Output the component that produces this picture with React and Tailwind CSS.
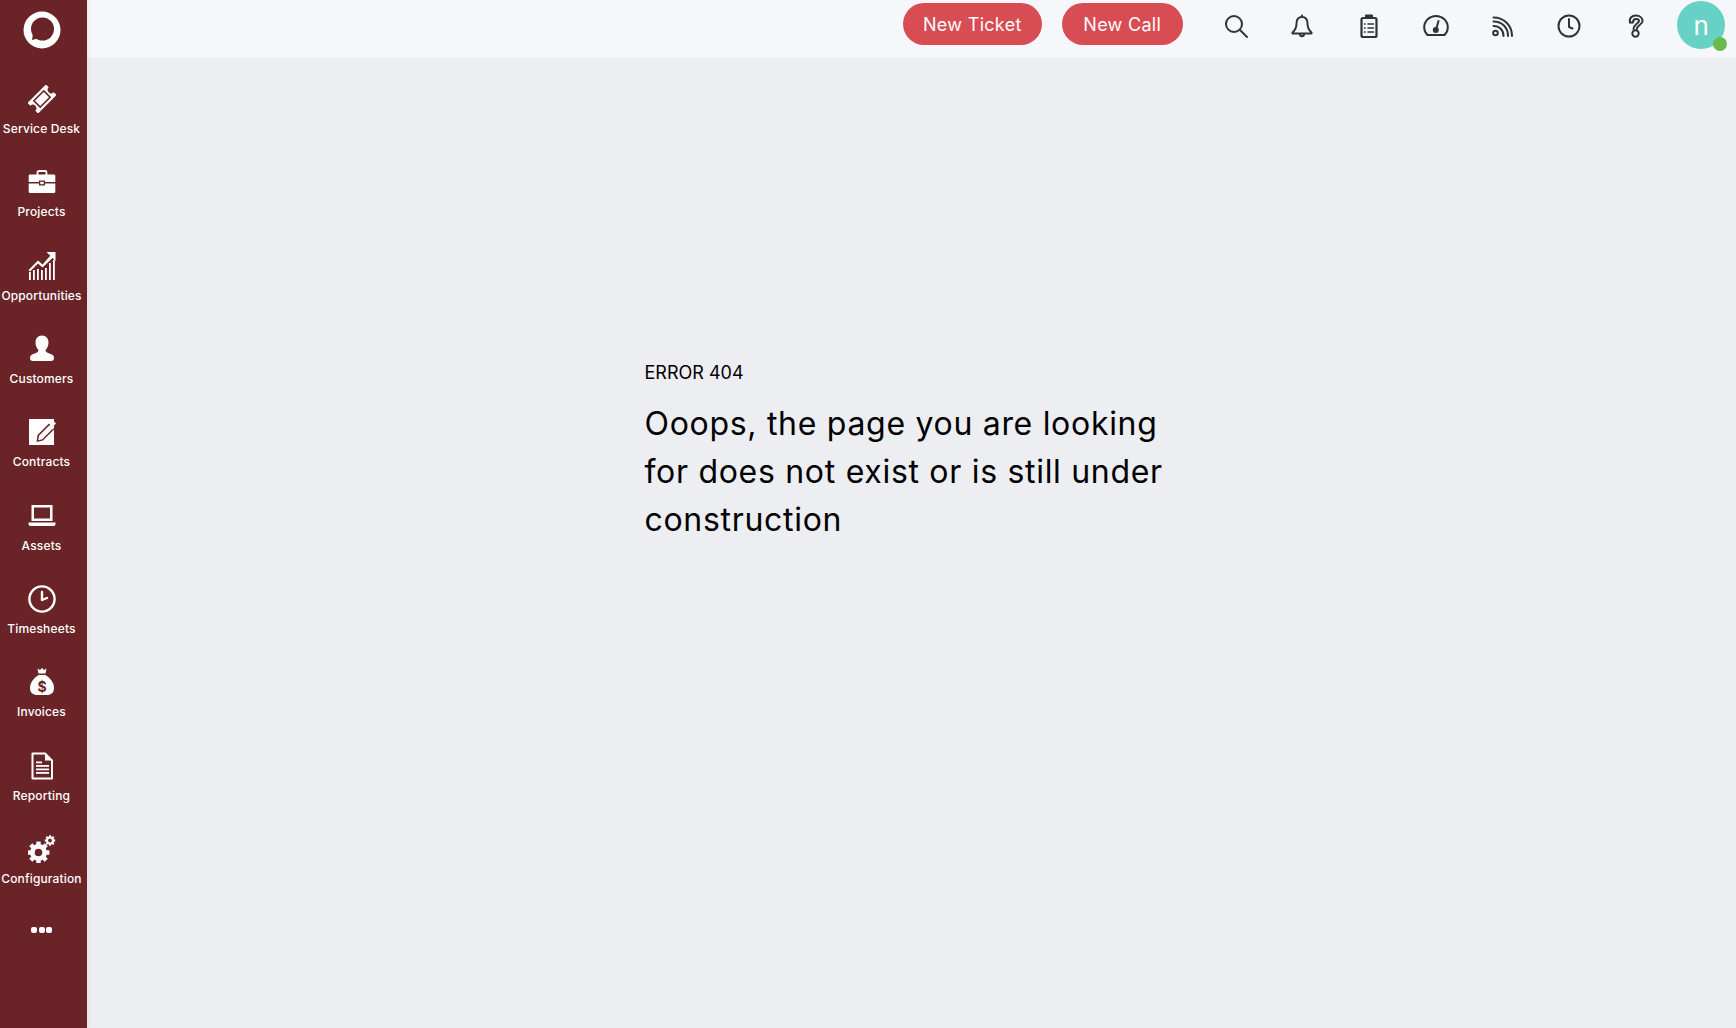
import React from "react";

const W = "#ffffff";
const D = "#6a2428";

const Logo = () => (
  <svg width="38" height="38" viewBox="0 0 38 38">
    <circle cx="19" cy="19" r="18.5" fill={W} />
    <circle cx="19.5" cy="18" r="11.5" fill={D} />
    <path d="M10 22 L9 29 L17 27 Z" fill={D} />
  </svg>
);

const Ticket = () => (
  <svg width="28" height="28" viewBox="0 0 28 28">
    <g transform="rotate(-45 14 14)">
      <path d="M1 6.5 H27 V10.5 A3.5 3.5 0 0 0 27 17.5 V21.5 H1 V17.5 A3.5 3.5 0 0 0 1 10.5 Z" fill={W} />
      <rect x="7" y="9.5" width="14" height="9" fill={W} stroke={D} strokeWidth="1.6" />
    </g>
  </svg>
);

const Briefcase = () => (
  <svg width="28" height="28" viewBox="0 0 28 28">
    <path d="M9.5 7 V4.5 A1.5 1.5 0 0 1 11 3 H17 A1.5 1.5 0 0 1 18.5 4.5 V7" fill="none" stroke={W} strokeWidth="1.8" />
    <path d="M2 6.5 H26 A1.3 1.3 0 0 1 27.3 7.8 V14 H17 V12.5 H11 V14 H0.7 V7.8 A1.3 1.3 0 0 1 2 6.5 Z" fill={W} />
    <path d="M0.7 15.5 H11 V17.5 H17 V15.5 H27.3 V23.7 A1.3 1.3 0 0 1 26 25 H2 A1.3 1.3 0 0 1 0.7 23.7 Z" fill={W} />
    <rect x="12.3" y="13.8" width="3.4" height="2.4" fill={W} />
  </svg>
);

const Chart = () => (
  <svg width="28" height="28" viewBox="0 0 28 28">
    <g fill={W}>
      <rect x="1" y="20" width="1.8" height="8" />
      <rect x="5" y="18" width="1.8" height="10" />
      <rect x="9" y="17" width="1.8" height="11" />
      <rect x="13" y="18" width="1.8" height="10" />
      <rect x="17" y="16" width="1.8" height="12" />
      <rect x="21" y="11" width="1.8" height="17" />
      <rect x="25" y="8" width="1.8" height="20" />
      <path d="M18.5 0 H27.5 V9 L24.5 6 L14.5 15.5 L10 11.5 L2 19.5 L0.5 18 L10 8.5 L14.5 12.5 L22.3 3.8 Z" />
    </g>
  </svg>
);

const User = () => (
  <svg width="28" height="28" viewBox="0 0 28 28">
    <path d="M14 0.5 C18 0.5 20.5 3.5 20.5 7.5 C20.5 11 19 13.5 17.5 15 C17.5 17 19 17.8 22 18.8 C25 19.8 26 21 26 23 C26 25 25 26 23 26 H5 C3 26 2 25 2 23 C2 21 3 19.8 6 18.8 C9 17.8 10.5 17 10.5 15 C9 13.5 7.5 11 7.5 7.5 C7.5 3.5 10 0.5 14 0.5 Z" fill={W} />
  </svg>
);

const Contract = () => (
  <svg width="28" height="28" viewBox="0 0 28 28">
    <path d="M1 1 H26 V27 H1 Z" fill={W} />
    <path d="M8.5 24 L9.5 17 L21 5.5 L26.5 11 L15 22.5 Z" fill={D} />
    <path d="M10.3 22.2 L11 17.8 L21 7.8 L24.3 11 L14.3 21.2 Z" fill={W} />
    <path d="M21.5 4 L24 1.5 L28 5.5 L25.5 8 Z" fill={W} />
    <path d="M22.6 6.6 L26 10 L24.5 11.5 L21 8 Z" fill={W} />
  </svg>
);

const Laptop = () => (
  <svg width="28" height="28" viewBox="0 0 28 28">
    <path d="M3.5 3 H24.5 V19 H3.5 Z M6 5.5 V16.5 H22 V5.5 Z" fill={W} fillRule="evenodd" />
    <path d="M0.5 20.5 H27.5 V22 A2 2 0 0 1 25.5 24 H2.5 A2 2 0 0 1 0.5 22 Z" fill={W} />
  </svg>
);

const Clock = () => (
  <svg width="28" height="28" viewBox="0 0 28 28" fill="none" stroke={W} strokeWidth="2.4">
    <circle cx="14" cy="14" r="12.6" />
    <path d="M14 7 V15 L19 13" strokeLinecap="round" strokeLinejoin="round" />
  </svg>
);

const MoneyBag = () => (
  <svg width="28" height="28" viewBox="0 0 28 28">
    <path d="M9.5 0.5 L12 2 L14 0 L16 2 L18.5 0.5 L17.5 5.5 H10.5 Z" fill={W} />
    <path d="M10.5 7 H17.5 C22 10 26 14.5 26 20 C26 25 22.5 27 19 27 H9 C5.5 27 2 25 2 20 C2 14.5 6 10 10.5 7 Z" fill={W} />
    <text x="14" y="23.5" textAnchor="middle" fontSize="14" fontWeight="700" fill={D} fontFamily="Inter, sans-serif">$</text>
  </svg>
);

const Report = () => (
  <svg width="28" height="28" viewBox="0 0 28 28">
    <path d="M4.5 1.5 H17 L24 8.5 V26.5 H4.5 Z" fill="none" stroke={W} strokeWidth="2" strokeLinejoin="round" />
    <path d="M17 1.5 V8.5 H24 Z" fill={W} />
    <g fill={W}>
      <rect x="8" y="9.5" width="6" height="1.8" />
      <rect x="8" y="13" width="13" height="1.8" />
      <rect x="8" y="16.5" width="13" height="1.8" />
      <rect x="8" y="20" width="13" height="1.8" />
    </g>
  </svg>
);

const Cog = ({ cx, cy, r, hole, teeth }) => (
  <g>
    {Array.from({ length: teeth }).map((_, i) => (
      <rect
        key={i}
        x={cx - r * 0.26}
        y={cy - r * 1.3}
        width={r * 0.52}
        height={r * 2.6}
        fill={W}
        transform={`rotate(${(i * 180) / teeth} ${cx} ${cy})`}
      />
    ))}
    <circle cx={cx} cy={cy} r={r} fill={W} />
    <circle cx={cx} cy={cy} r={hole} fill={D} />
  </g>
);

const Gears = () => (
  <svg width="28" height="28" viewBox="0 0 28 28">
    <Cog cx={10.5} cy={17.5} r={8.4} hole={3.8} teeth={4} />
    <Cog cx={22} cy={5.5} r={4} hole={1.9} teeth={4} />
  </svg>
);

const navItems = [
  { label: "Service Desk", icon: <Ticket /> },
  { label: "Projects", icon: <Briefcase /> },
  { label: "Opportunities", icon: <Chart /> },
  { label: "Customers", icon: <User /> },
  { label: "Contracts", icon: <Contract /> },
  { label: "Assets", icon: <Laptop /> },
  { label: "Timesheets", icon: <Clock /> },
  { label: "Invoices", icon: <MoneyBag /> },
  { label: "Reporting", icon: <Report /> },
  { label: "Configuration", icon: <Gears /> },
];

const headerIcon = {
  width: 26,
  height: 26,
  viewBox: "0 0 26 26",
  fill: "none",
  stroke: "#333333",
  strokeWidth: 2,
  strokeLinecap: "round",
  strokeLinejoin: "round",
};

const headerIcons = [
  <svg {...headerIcon} key="search">
    <circle cx="11" cy="11" r="8" />
    <path d="M17 17 L24 24" />
  </svg>,
  <svg {...headerIcon} key="bell">
    <path d="M13 4 C9 4 7.5 7 7.5 10.5 C7.5 15 6.5 17 3.5 19.5 V20.5 H22.5 V19.5 C19.5 17 18.5 15 18.5 10.5 C18.5 7 17 4 13 4 Z" />
    <path d="M13 2.5 V4 M11 21 C11 24 15 24 15 21" />
  </svg>,
  <svg {...headerIcon} key="clipboard">
    <rect x="5.5" y="5" width="15" height="19" rx="1.5" strokeWidth="2.2" />
    <path d="M10 5 V2.5 H16 V5 Z" fill="#333333" />
    <path d="M12 11 H17.5 M12 15 H17.5 M12 19 H17.5" strokeWidth="1.5" />
    <path d="M8.6 11 H9 M8.6 15 H9 M8.6 19 H9" strokeWidth="1.7" />
  </svg>,
  <svg {...headerIcon} key="gauge">
    <path d="M4.5 22 H21.5 C23.5 20 24.8 17.5 24.8 14.5 C24.8 8 19.5 3 13 3 C6.5 3 1.2 8 1.2 14.5 C1.2 17.5 2.5 20 4.5 22 Z" />
    <path d="M15.5 8 L13.5 15" />
    <circle cx="12.8" cy="17" r="2" fill="#333333" />
  </svg>,
  <svg {...headerIcon} key="rss">
    <circle cx="6.5" cy="20" r="2.3" />
    <path d="M4.5 13 C10.5 13 14.5 17 14.5 23" />
    <path d="M4.5 8.5 C13 8.5 19 14.5 19 23" />
    <path d="M4.5 4.5 C15 4.5 23 12.5 23 23" />
  </svg>,
  <svg {...headerIcon} key="clock">
    <circle cx="13" cy="13" r="10.5" />
    <path d="M13 6 V14 L16.5 15.5" />
  </svg>,
  <svg {...headerIcon} key="help">
    <path d="M7 9.5 C6 5 9 2.5 13 2.5 C17 2.5 19.5 5 19.5 8 C19.5 12 14 12 13.8 16" />
    <path d="M7 9.5 H10 C10 7 11 6 13 6 C15 6 16 7 16 8 C16 10 11 11 10.5 16" />
    <circle cx="12.5" cy="20.5" r="3.2" />
  </svg>,
];

export default function App() {
  return (
    <div className="flex h-[1028px] w-full overflow-hidden bg-[#eceef2] font-['Inter',sans-serif]">
      <aside className="relative z-10 flex h-full w-[87px] shrink-0 flex-col bg-[#6a2428] pr-[4px] shadow-[2px_0_6px_rgba(0,0,0,0.05)]">
        <div className="flex h-[76px] justify-center pt-[11px]">
          <Logo />
        </div>
        {navItems.map((item) => (
          <div key={item.label} className="flex h-[83.33px] flex-col items-center pt-[9px]">
            <div className="flex h-[28px] w-[28px] items-center justify-center">{item.icon}</div>
            <span className="mt-[7px] whitespace-nowrap text-[12px] leading-[18px] font-medium tracking-[0.15px] text-white">
              {item.label}
            </span>
          </div>
        ))}
        <div className="flex justify-center gap-[1.5px] pt-[18px]">
          <span className="h-[6px] w-[6px] rounded-[2px] bg-white" />
          <span className="h-[6px] w-[6px] rounded-[2px] bg-white" />
          <span className="h-[6px] w-[6px] rounded-[2px] bg-white" />
        </div>
      </aside>

      <div className="flex min-w-0 flex-1 flex-col">
        <header className="flex h-[59px] shrink-0 items-start border-b border-[#eceef1] bg-[#f5f7fa] pt-[3px] pr-[11px] pl-[816px]">
          <button className="h-[42px] w-[139px] rounded-full bg-[#d84c53] text-[18px] tracking-[0.3px] text-white">New Ticket</button>
          <button className="ml-[20px] h-[42px] w-[121.5px] rounded-full bg-[#d84c53] text-[18px] tracking-[0.3px] text-white">New Call</button>
          <div className="ml-[19.5px] flex h-[46px] items-center">
            {headerIcons.map((icon, i) => (
              <div key={i} className="flex w-[66.7px] items-center justify-center">
                {icon}
              </div>
            ))}
          </div>
          <div className="relative -mt-[2px] ml-[8px] flex h-[48px] w-[48px] items-center justify-center rounded-full bg-[#68d1c6] text-[26px] text-white">
            n
            <span className="absolute right-[-2px] bottom-[-2px] h-[14px] w-[14px] rounded-full bg-[#69bb4f]" />
          </div>
        </header>

        <main className="flex-1 pt-[300px]">
          <div className="mx-auto w-[534px] text-black">
            <p className="text-[18px] leading-[27px]">ERROR 404</p>
            <h1 className="mt-[14px] text-[32px] leading-[48px] font-normal tracking-[0.7px]">
              Ooops, the page you are looking for does not exist or is still under construction
            </h1>
          </div>
        </main>
      </div>
    </div>
  );
}
